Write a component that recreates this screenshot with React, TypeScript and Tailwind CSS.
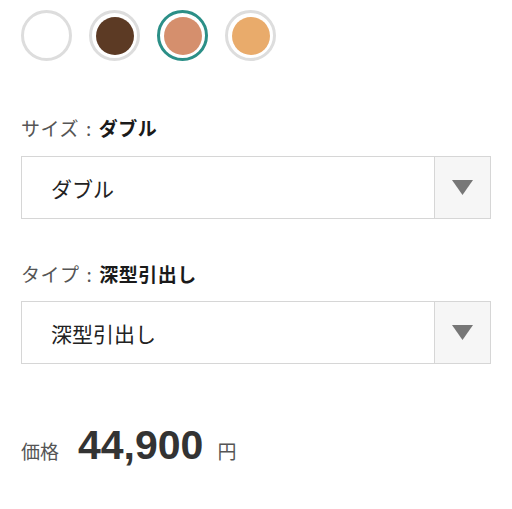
const colors = [
  { fill: '#ffffff', selected: false },
  { fill: '#5c3a24', selected: false },
  { fill: '#d58f6d', selected: true },
  { fill: '#e9ab6b', selected: false },
]

const jp = { fontFamily: '"Noto Sans CJK JP", "Liberation Sans", sans-serif' }

function Swatch({ fill, selected }: { fill: string; selected: boolean }) {
  return (
    <div
      className={
        selected
          ? 'flex h-[51px] w-[51px] items-center justify-center rounded-full border-[3px] border-[#2b8f87] bg-white'
          : 'flex h-[51px] w-[51px] items-center justify-center rounded-full border-[3px] border-[#dddddd] bg-white'
      }
    >
      <div className="h-[38px] w-[38px] rounded-full" style={{ backgroundColor: fill }} />
    </div>
  )
}

function Label({ name, value }: { name: string; value: string }) {
  return (
    <div className="flex items-center text-[19px] leading-[26px] text-[#555] tracking-[0.5px]">
      <span>{name}</span>
      <span className="mx-[7px]">:</span>
      <span className="font-bold text-[#1a1a1a]">{value}</span>
    </div>
  )
}

function SelectBox({ value }: { value: string }) {
  return (
    <div className="flex h-[63px] w-[470px] border border-[#d6d6d6] bg-white">
      <div className="flex flex-1 items-center pl-[29px] pt-[3px] text-[21px] text-[#222]">{value}</div>
      <div className="flex w-[56px] items-center justify-center border-l border-[#d6d6d6] bg-[#f6f6f6]">
        <svg width="21" height="15" viewBox="0 0 21 15">
          <path d="M0 0 H21 L10.5 15 Z" fill="#777777" />
        </svg>
      </div>
    </div>
  )
}

export default function App() {
  return (
    <div className="h-[509px] w-[512px] bg-white pl-[21px] pt-[10px]" style={jp}>
      <div className="flex gap-[17px]">
        {colors.map((c, i) => (
          <Swatch key={i} fill={c.fill} selected={c.selected} />
        ))}
      </div>

      <div className="mt-[54px]">
        <Label name="サイズ" value="ダブル" />
      </div>
      <div className="mt-[15px]">
        <SelectBox value="ダブル" />
      </div>

      <div className="mt-[42px]">
        <Label name="タイプ" value="深型引出し" />
      </div>
      <div className="mt-[14px]">
        <SelectBox value="深型引出し" />
      </div>

      <div className="mt-[57px] flex items-baseline">
        <span className="text-[19px] text-[#555]">価格</span>
        <span
          className="ml-[19px] text-[41px] font-bold leading-[48px] text-[#333]"
          style={{ fontFamily: '"Liberation Sans", Arial, sans-serif' }}
        >
          44,900
        </span>
        <span className="ml-[14px] text-[19px] text-[#555]">円</span>
      </div>
    </div>
  )
}
